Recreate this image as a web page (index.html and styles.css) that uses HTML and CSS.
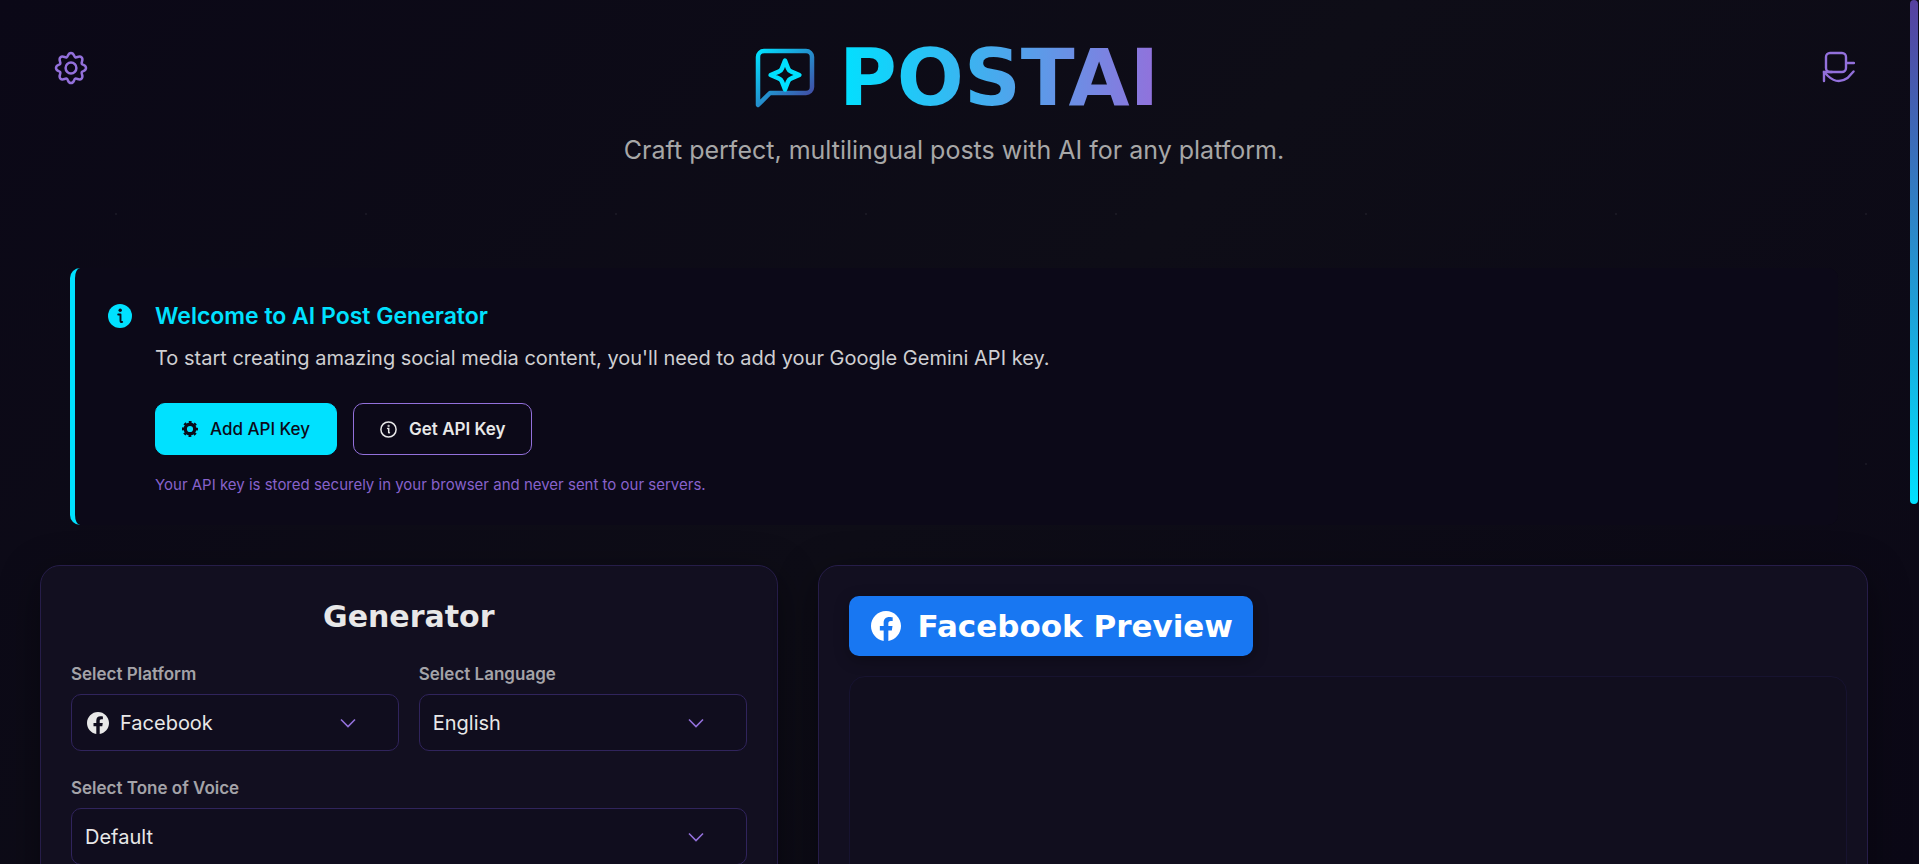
FILE: index.html
```html
<!DOCTYPE html>
<html lang="en">
<head>
<meta charset="utf-8">
<meta name="viewport" content="width=device-width, initial-scale=1">
<title>PostAI</title>
<link rel="stylesheet" href="styles.css">
</head>
<body>
<svg class="defs" aria-hidden="true">
  <defs>
    <linearGradient id="bubble" x1="0" y1="0" x2="1" y2="1">
      <stop offset="0" stop-color="#00e1ff"/>
      <stop offset="1" stop-color="#483d9b"/>
    </linearGradient>
    <symbol id="facebook" viewBox="0 0 16 16">
      <path d="M16 8.05C16 3.6 12.42 0 8 0S0 3.6 0 8.05C0 12.07 2.93 15.4 6.75 16v-5.62H4.72V8.05h2.03V6.28c0-2.02 1.19-3.13 3.02-3.13.88 0 1.79.16 1.79.16v1.98h-1.01c-.99 0-1.3.62-1.3 1.26v1.5h2.22l-.36 2.33H9.25V16C13.07 15.4 16 12.07 16 8.05z"/>
    </symbol>
    <symbol id="chevron" viewBox="0 0 16 10">
      <path d="M1 1.5l7 7 7-7" fill="none" stroke="currentColor" stroke-width="1.6"/>
    </symbol>
  </defs>
</svg>
<div class="page">
  <header class="header">
    <button class="icon-button" aria-label="Settings">
      <svg width="36" height="36" viewBox="-18 -18 36 36" fill="none" stroke="currentColor" stroke-width="2.5">
        <path d="M0-15C3.3-15 2.7-11.4 4.3-10.7C6-10 8.3-12.900 10.600-10.600C12.900-8.300 10-6 10.700-4.300C11.400-2.700 15-3.300 15 0C15 3.300 11.400 2.700 10.700 4.300C10 6 12.900 8.300 10.600 10.600C8.300 12.900 6 10 4.300 10.700C2.700 11.400 3.300 15 0 15C-3.300 15-2.700 11.400-4.300 10.700C-6 10-8.300 12.900-10.600 10.600C-12.900 8.300-10 6-10.700 4.300C-11.400 2.700-15 3.300-15 0C-15-3.300-11.400-2.700-10.700-4.300C-10-6-12.900-8.300-10.600-10.600C-8.300-12.900-6-10-4.300-10.700C-2.700-11.400-3.300-15 0-15z"/>
        <circle r="5.4"/>
      </svg>
    </button>
    <div class="brand">
      <h1 class="brand-title">
        <svg width="72" height="72" viewBox="0 0 24 24" fill="none" stroke-width="1.5" stroke-linecap="round" stroke-linejoin="round" aria-hidden="true">
          <path stroke="url(#bubble)" d="M21 15a2 2 0 0 1-2 2H7l-4 4V5a2 2 0 0 1 2-2h14a2 2 0 0 1 2 2z"/>
          <path stroke="#00e1ff" d="M12 6.200l1 2.600q.3.800 1.100 1.100l2.700 1.100-2.700 1.100q-.8.300-1.100 1.100l-1 2.600-1-2.600q-.3-.800-1.100-1.100L7.200 11l2.700-1.100q.8-.3 1.100-1.100z"/>
        </svg>
        <span class="brand-name">POSTAI</span>
      </h1>
      <p class="tagline">Craft perfect, multilingual posts with AI for any platform.</p>
    </div>
    <button class="icon-button" aria-label="Buy me a coffee">
      <svg width="36" height="36" viewBox="0 0 36 36" fill="none" stroke="currentColor" stroke-width="2.4" stroke-linecap="round">
        <rect x="7" y="3" width="20" height="19" rx="4"/>
        <path d="M28 13h7"/>
        <path d="M5 31V22h8"/>
        <path d="M5 22l4 4q9.5 9 19.500 2l6-6.500"/>
      </svg>
    </button>
  </header>

  <section class="notice">
    <svg class="notice-icon" width="24" height="24" viewBox="0 0 24 24" aria-hidden="true">
      <circle cx="12" cy="12" r="12" fill="#00e1ff"/>
      <circle cx="12.200" cy="6.300" r="1.700" fill="#0c0a18"/>
      <path d="M10.200 10.500h2.300v6.200q0 1.700 1.700 1.200" fill="none" stroke="#0c0a18" stroke-width="1.900" stroke-linecap="round" stroke-linejoin="round"/>
    </svg>
    <div class="notice-body">
      <h2 class="notice-title">Welcome to AI Post Generator</h2>
      <p class="notice-text">To start creating amazing social media content, you'll need to add your Google Gemini API key.</p>
      <div class="notice-actions">
        <button class="button button-primary">
          <svg width="16" height="16" viewBox="-8 -8 16 16" fill="none" stroke="currentColor" aria-hidden="true">
            <circle r="4.800" stroke-width="3.400"/>
            <circle r="7" stroke-width="2" stroke-dasharray="2.800 2.698" stroke-dashoffset="1.400"/>
          </svg>
          Add API Key
        </button>
        <a class="button button-outline" href="#api-key">
          <svg width="17" height="17" viewBox="0 0 17 17" fill="none" stroke="currentColor" stroke-width="1.500" stroke-linecap="round" aria-hidden="true">
            <circle cx="8.500" cy="8.500" r="7.600"/>
            <path d="M7.600 7.400h1.100v3.800q0 .8.700.6"/>
            <circle cx="8.600" cy="4.900" r=".3"/>
          </svg>
          Get API Key
        </a>
      </div>
      <p class="notice-note">Your API key is stored securely in your browser and never sent to our servers.</p>
    </div>
  </section>

  <main class="columns">
    <section class="card">
      <h2 class="card-title">Generator</h2>
      <form class="form">
        <div class="field">
          <label for="platform">Select Platform</label>
          <div class="select select-with-icon">
            <select id="platform"><option>Facebook</option></select>
            <svg class="select-icon" width="22" height="22" fill="currentColor" aria-hidden="true"><use href="#facebook"/></svg>
            <svg class="chevron" width="16" height="10" aria-hidden="true"><use href="#chevron"/></svg>
          </div>
        </div>
        <div class="field">
          <label for="language">Select Language</label>
          <div class="select">
            <select id="language"><option>English</option></select>
            <svg class="chevron" width="16" height="10" aria-hidden="true"><use href="#chevron"/></svg>
          </div>
        </div>
        <div class="field field-wide">
          <label for="tone">Select Tone of Voice</label>
          <div class="select">
            <select id="tone"><option>Default</option></select>
            <svg class="chevron" width="16" height="10" aria-hidden="true"><use href="#chevron"/></svg>
          </div>
        </div>
      </form>
    </section>
    <section class="card">
      <h2 class="preview-title">
        <svg width="30" height="30" fill="currentColor" aria-hidden="true"><use href="#facebook"/></svg>
        Facebook Preview
      </h2>
      <div class="preview-panel"></div>
    </section>
  </main>
</div>
<div class="scroll-thumb"></div>
</body>
</html>
```
FILE: styles.css
```css
* { box-sizing: border-box; }

body {
  margin: 0;
  background: #0c0a15;
  color: #e8e8e8;
  font-family: Inter, "Liberation Sans", sans-serif;
}

h1, h2, p { margin: 0; }

button, select { font-family: inherit; }

.defs {
  position: absolute;
  width: 0;
  height: 0;
}

.page {
  height: 100vh;
  overflow: hidden;
  padding: 40px 51px 0 40px;
  background:
    radial-gradient(circle, rgba(255, 255, 255, 0.05) 1px, transparent 1px) -9px 89px / 250px 250px,
    linear-gradient(135deg, #0b0817, #0e0d17 50%, #0b0816);
}

.header {
  display: flex;
  justify-content: space-between;
  align-items: flex-start;
  padding: 0 13px;
}

.icon-button {
  display: flex;
  margin-top: 10px;
  padding: 0;
  border: 0;
  background: none;
  color: #9370db;
}

.brand { text-align: center; }

.brand-title {
  display: flex;
  justify-content: center;
  align-items: center;
  gap: 18px;
  font-family: "DejaVu Sans", sans-serif;
  font-size: 79px;
  font-weight: 700;
  line-height: 76px;
}

.brand-name {
  background: linear-gradient(90deg, #00e1ff, #9370db);
  background-clip: text;
  -webkit-background-clip: text;
  color: transparent;
}

.tagline {
  margin-top: 16px;
  color: #a7a7a7;
  font-size: 25px;
  line-height: 36px;
}

.notice {
  display: flex;
  gap: 23px;
  margin: 100px 30px 40px;
  padding: 30px 33px;
  border-left: 5px solid #00e1ff;
  border-radius: 10px;
  background: #0c0918;
}

.notice-icon {
  flex: none;
  margin-top: 6px;
}

.notice-title {
  color: #00e1ff;
  font-size: 23px;
  font-weight: 600;
  line-height: 36px;
}

.notice-text {
  margin-top: 8px;
  color: #cfcfd2;
  font-size: 20px;
  line-height: 32px;
}

.notice-actions {
  display: flex;
  gap: 16px;
  margin-top: 29px;
}

.button {
  display: flex;
  align-items: center;
  gap: 12px;
  height: 52px;
  padding: 0 26px;
  border: 1px solid #00e1ff;
  border-radius: 10px;
  font-size: 17px;
  text-decoration: none;
}

.button-primary {
  background: #00e1ff;
  color: #0c0a18;
  font-weight: 500;
}

.button-outline {
  border-color: #9370db;
  color: #e8e8e8;
  font-weight: 600;
}

.notice-note {
  margin-top: 20px;
  color: #8762cb;
  font-size: 15px;
  line-height: 20px;
}

.columns {
  display: grid;
  grid-template-columns: 33fr 47fr;
  gap: 40px;
}

.card {
  min-height: 720px;
  padding: 30px;
  border: 1px solid #261d49;
  border-radius: 20px;
  background: #120f20;
  box-shadow: 0 10px 40px rgba(0, 0, 0, 0.4);
}

.card-title {
  margin-bottom: 24px;
  font-family: "DejaVu Sans", sans-serif;
  font-size: 30px;
  line-height: 41px;
  text-align: center;
}

.form {
  display: grid;
  grid-template-columns: 1fr 1fr;
  gap: 24px 20px;
}

.field {
  display: flex;
  flex-direction: column;
  gap: 7px;
}

.field-wide { grid-column: 1 / -1; }

.field label {
  color: #a4a3a8;
  font-size: 17px;
  font-weight: 600;
  line-height: 26px;
}

.select {
  display: grid;
  align-items: center;
}

.select > * { grid-area: 1 / 1; }

.select select {
  appearance: none;
  width: 100%;
  height: 57px;
  padding: 0 13px;
  border: 1px solid #30245c;
  border-radius: 10px;
  background: #100d1e;
  color: #e8e8e8;
  font-size: 20px;
}

.select-with-icon select { padding-left: 48px; }

.select-icon {
  margin-left: 16px;
  pointer-events: none;
}

.chevron {
  justify-self: end;
  margin-right: 43px;
  color: #9370db;
  pointer-events: none;
}

.preview-title {
  display: flex;
  align-items: center;
  gap: 17px;
  width: fit-content;
  height: 60px;
  padding: 0 20px 0 22px;
  border-radius: 10px;
  background: #1877f2;
  box-shadow: 0 4px 15px rgba(0, 0, 0, 0.3);
  color: #fff;
  font-family: "DejaVu Sans", sans-serif;
  font-size: 31px;
}

.preview-panel {
  min-height: 560px;
  margin-top: 20px;
  margin-right: -10px;
  border: 1px solid #171330;
  border-radius: 16px;
  background: #110e1e;
}

.scroll-thumb {
  position: fixed;
  top: 0;
  right: 1px;
  width: 8px;
  height: 504px;
  border-radius: 4px;
  background: linear-gradient(#5640a0, #1e9ed6 60%, #00e1ff);
}
```
